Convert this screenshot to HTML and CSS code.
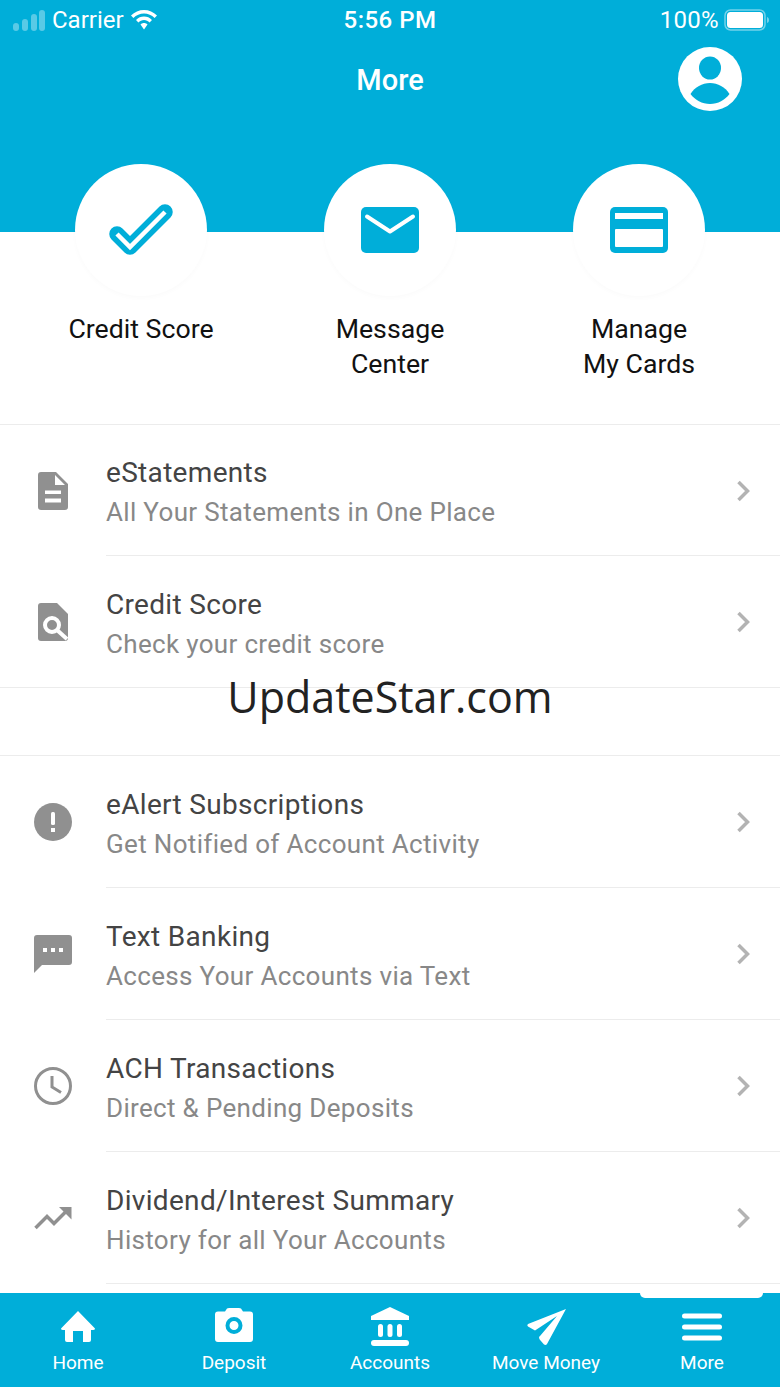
FILE: index.html
```html
<!DOCTYPE html>
<html lang="en">
<head>
<meta charset="utf-8">
<title>More</title>
<link rel="stylesheet" href="styles.css">
</head>
<body>
<div class="phone">
  <header class="hero">
    <div class="status">
      <div class="status-left">
        <svg class="signal" width="34" height="22" viewBox="0 0 34 22"><rect x="0" y="14" width="6" height="8" rx="3"/><rect x="9" y="10" width="6" height="12" rx="3"/><rect x="18" y="5" width="6" height="17" rx="3"/><rect x="26" y="1" width="6" height="21" rx="3"/></svg>
        <span>Carrier</span>
        <svg class="wifi" width="30" height="22" viewBox="0 0 28 22"><path d="M14 1C9 1 4.500 3 1 6.500L3.400 9C6.300 6.100 10 4.500 14 4.500S21.700 6.100 24.600 9L27 6.500C23.500 3 19 1 14 1Z"/><path d="M14 7.500C11 7.500 8.200 8.700 6 10.900L8.400 13.400C9.900 11.900 11.900 11 14 11S18.100 11.900 19.600 13.400L22 10.900C19.800 8.700 17 7.500 14 7.500Z"/><path d="M14 14C12.700 14 11.500 14.500 10.500 15.500L14 20.500L17.500 15.500C16.500 14.500 15.300 14 14 14Z"/></svg>
      </div>
      <div class="status-time">5:56 PM</div>
      <div class="status-right">
        <span class="battery-pct">100%</span>
        <svg width="46" height="22" viewBox="0 0 46 22"><rect class="batt-edge" x="1" y="1" width="40" height="20" rx="5.500"/><rect class="batt-fill" x="3" y="3" width="36" height="16" rx="3.500"/><path class="batt-tip" d="M43 8C44.500 8.500 45 9.500 45 11S44.500 13.500 43 14Z"/></svg>
      </div>
    </div>
    <div class="nav">
      <h1>More</h1>
      <svg class="avatar" width="64" height="64" viewBox="0 0 64 64"><circle cx="32" cy="32" r="32" fill="#fff"/><ellipse cx="32" cy="21" rx="11" ry="11.500" fill="#00aed9"/><path d="M32 36C24 36 17 40 12.500 47C17 53 24 57 32 57S47 53 51.500 47C47 40 40 36 32 36Z" fill="#00aed9"/></svg>
    </div>
  </header>

  <main class="content">
    <section class="quick">
      <div class="quick-item">
        <div class="quick-circle">
          <svg width="66" height="54" viewBox="0 0 66 54"><path d="M9 31L22 44L57 9" fill="none" stroke="#00aed9" stroke-width="15.500" stroke-linecap="round" stroke-linejoin="round"/><path d="M9 31L22 44L57 9" fill="none" stroke="#fff" stroke-width="4.500"/></svg>
        </div>
        <div class="quick-label">Credit Score</div>
      </div>
      <div class="quick-item">
        <div class="quick-circle">
          <svg width="58" height="46" viewBox="0 0 58 46"><rect x="0" y="0" width="58" height="46" rx="5" fill="#00aed9"/><path d="M6 9.500L29 24.500L52 9.500" fill="none" stroke="#fff" stroke-width="4" stroke-linecap="round" stroke-linejoin="round"/></svg>
        </div>
        <div class="quick-label">Message<br>Center</div>
      </div>
      <div class="quick-item">
        <div class="quick-circle">
          <svg width="58" height="46" viewBox="0 0 58 46"><rect x="0" y="0" width="58" height="46" rx="5" fill="#00aed9"/><rect x="5" y="6" width="48" height="6" fill="#fff"/><rect x="5" y="22" width="48" height="18" rx="1" fill="#fff"/></svg>
        </div>
        <div class="quick-label">Manage<br>My Cards</div>
      </div>
    </section>

    <section class="group group-first">
      <a class="row">
        <span class="row-icon">
          <svg width="30" height="38" viewBox="0 0 30 38"><path fill-rule="evenodd" d="M3 0H18L30 12V35A3 3 0 0 1 27 38H3A3 3 0 0 1 0 35V3A3 3 0 0 1 3 0ZM17 3V13H27ZM7 18.500V22H23V18.500ZM7 26.500V30.500H23V26.500Z" fill="#909090"/></svg>
        </span>
        <span class="row-body">
          <span class="row-title">eStatements</span>
          <span class="row-sub">All Your Statements in One Place</span>
        </span>
        <svg class="chev" width="14" height="22" viewBox="0 0 14 22"><path d="M2.500 2L11.500 11L2.500 20"/></svg>
      </a>
      <a class="row">
        <span class="row-icon">
          <svg width="30" height="38" viewBox="0 0 30 38"><path d="M3 0H19L30 11V35A3 3 0 0 1 27 38H3A3 3 0 0 1 0 35V3A3 3 0 0 1 3 0Z" fill="#909090"/><circle cx="14" cy="22" r="7" fill="none" stroke="#fff" stroke-width="4"/><path d="M19 27L29 36" stroke="#fff" stroke-width="4"/></svg>
        </span>
        <span class="row-body">
          <span class="row-title">Credit Score</span>
          <span class="row-sub">Check your credit score</span>
        </span>
        <svg class="chev" width="14" height="22" viewBox="0 0 14 22"><path d="M2.500 2L11.500 11L2.500 20"/></svg>
      </a>
    </section>

    <div class="spacer"><span class="watermark">UpdateStar.com</span></div>

    <section class="group">
      <a class="row">
        <span class="row-icon">
          <svg width="38" height="38" viewBox="0 0 38 38"><circle cx="19" cy="19" r="19" fill="#909090"/><rect x="17" y="9" width="4" height="13" rx="1.500" fill="#fff"/><rect x="17" y="25" width="4" height="4" fill="#fff"/></svg>
        </span>
        <span class="row-body">
          <span class="row-title">eAlert Subscriptions</span>
          <span class="row-sub">Get Notified of Account Activity</span>
        </span>
        <svg class="chev" width="14" height="22" viewBox="0 0 14 22"><path d="M2.500 2L11.500 11L2.500 20"/></svg>
      </a>
      <a class="row">
        <span class="row-icon">
          <svg width="38" height="38" viewBox="0 0 38 38"><path d="M3 0H35A3 3 0 0 1 38 3V27A3 3 0 0 1 35 30H8L0 38V3A3 3 0 0 1 3 0Z" fill="#909090"/><rect x="9" y="13" width="4" height="4" fill="#fff"/><rect x="17" y="13" width="4" height="4" fill="#fff"/><rect x="25" y="13" width="4" height="4" fill="#fff"/></svg>
        </span>
        <span class="row-body">
          <span class="row-title">Text Banking</span>
          <span class="row-sub">Access Your Accounts via Text</span>
        </span>
        <svg class="chev" width="14" height="22" viewBox="0 0 14 22"><path d="M2.500 2L11.500 11L2.500 20"/></svg>
      </a>
      <a class="row">
        <span class="row-icon">
          <svg width="38" height="38" viewBox="0 0 38 38"><circle cx="19" cy="19" r="17.500" fill="none" stroke="#909090" stroke-width="3"/><path d="M18 9V20L27 25.500" fill="none" stroke="#909090" stroke-width="3"/></svg>
        </span>
        <span class="row-body">
          <span class="row-title">ACH Transactions</span>
          <span class="row-sub">Direct &amp; Pending Deposits</span>
        </span>
        <svg class="chev" width="14" height="22" viewBox="0 0 14 22"><path d="M2.500 2L11.500 11L2.500 20"/></svg>
      </a>
      <a class="row">
        <span class="row-icon">
          <svg width="38" height="24" viewBox="0 0 38 24"><path d="M1.500 22L13 10.500L20 17.500L33 4.500" fill="none" stroke="#909090" stroke-width="3.500"/><path d="M25 1H37.500V13.500Z" fill="#909090"/></svg>
        </span>
        <span class="row-body">
          <span class="row-title">Dividend/Interest Summary</span>
          <span class="row-sub">History for all Your Accounts</span>
        </span>
        <svg class="chev" width="14" height="22" viewBox="0 0 14 22"><path d="M2.500 2L11.500 11L2.500 20"/></svg>
      </a>
    </section>
  </main>

  <nav class="tabs">
    <span class="tab-notch"></span>
    <a class="tab">
      <svg width="40" height="42" viewBox="0 0 40 42"><path d="M20 4L37 21.500Q37 23 35 23H33V33A2 2 0 0 1 31 35H25V24H15V35H9A2 2 0 0 1 7 33V23H5Q3 23 3 21.500Z" fill="#fff"/></svg>
      <span>Home</span>
    </a>
    <a class="tab">
      <svg width="40" height="42" viewBox="0 0 40 42"><path fill-rule="evenodd" d="M12 3Q12.500 1 15 1H25Q27.500 1 28 3L29 4.500H36A3 3 0 0 1 39 7.500V32A3 3 0 0 1 36 35H4A3 3 0 0 1 1 32V7.500A3 3 0 0 1 4 4.500H11ZM20 10A8.500 8.500 0 1 0 20 27A8.500 8.500 0 1 0 20 10ZM20 14A4.500 4.500 0 1 1 20 23A4.500 4.500 0 1 1 20 14Z" fill="#fff"/></svg>
      <span>Deposit</span>
    </a>
    <a class="tab">
      <svg width="40" height="42" viewBox="0 0 40 42"><path d="M20 0L39 9V13H1V9Z" fill="#fff"/><rect x="8" y="17" width="5" height="13" rx="2.500" fill="#fff"/><rect x="17.500" y="17" width="5" height="13" rx="2.500" fill="#fff"/><rect x="27" y="17" width="5" height="13" rx="2.500" fill="#fff"/><rect x="1" y="33" width="38" height="6" rx="3" fill="#fff"/></svg>
      <span>Accounts</span>
    </a>
    <a class="tab">
      <svg width="40" height="42" viewBox="0 0 40 42"><path d="M40 2L2 17Q0.500 18 2 19.500L9 23.500L31 9L14 29L13 30Q13 32 14.500 33.500L18 37.500Q20 38.500 21 37Z" fill="#fff"/></svg>
      <span>Move Money</span>
    </a>
    <a class="tab">
      <svg width="40" height="42" viewBox="0 0 40 42"><rect y="6.500" width="40" height="5" rx="2.500" fill="#fff"/><rect y="17.500" width="40" height="5" rx="2.500" fill="#fff"/><rect y="28.500" width="40" height="5" rx="2.500" fill="#fff"/></svg>
      <span>More</span>
    </a>
  </nav>
</div>
</body>
</html>
```
FILE: styles.css
```css
* { box-sizing: border-box; }
html, body { margin: 0; padding: 0; }
body { font-family: Roboto, "Liberation Sans", sans-serif; background: #fff; }

.phone {
  width: 780px;
  height: 1387px;
  display: flex;
  flex-direction: column;
  overflow: hidden;
}

.hero { height: 232px; background: #00aed9; color: #fff; flex: none; }

.status {
  height: 40px;
  display: grid;
  grid-template-columns: 1fr auto 1fr;
  align-items: center;
  padding: 0 10px;
  font-size: 24px;
}
.status-left, .status-right { display: flex; align-items: center; }
.status-left { gap: 5px; padding-left: 3px; }
.status-right { justify-content: flex-end; gap: 5px; }
.status-time { font-weight: 500; letter-spacing: 0.5px; }
.battery-pct { letter-spacing: 0.3px; }
.signal rect { fill: #fff; opacity: 0.35; }
.wifi path { fill: #fff; }
.batt-edge { fill: none; stroke: #fff; stroke-opacity: 0.45; stroke-width: 1.500; }
.batt-fill { fill: #fff; }
.batt-tip { fill: #fff; opacity: 0.45; }

.nav {
  display: flex;
  justify-content: center;
  align-items: center;
  position: relative;
  height: 72px;
  padding-top: 8px;
}
.nav h1 { margin: 0; font-size: 29px; font-weight: 500; line-height: 1; }
.avatar { position: absolute; right: 38px; top: 7px; }

.content { flex: 1; min-height: 0; position: relative; }

.quick {
  display: grid;
  grid-template-columns: repeat(3, 249px);
  justify-content: center;
  margin-top: -68px;
  height: 260px;
}
.quick-item { display: flex; flex-direction: column; align-items: center; }
.quick-circle {
  width: 132px;
  height: 132px;
  border-radius: 50%;
  background: #fff;
  box-shadow: 0 2px 5px rgba(0, 0, 0, 0.02);
  display: flex;
  align-items: center;
  justify-content: center;
}
.quick-label {
  margin-top: 16px;
  font-size: 26.700px;
  line-height: 35px;
  color: #111;
  text-align: center;
}

.group { border-top: 1px solid #ececec; }

.row {
  display: flex;
  align-items: center;
  height: 132px;
  position: relative;
}
.group-first .row:first-child { height: 131px; }
.row-icon { width: 106px; flex: none; display: flex; align-items: center; justify-content: center; }
.row-body {
  flex: 1;
  display: flex;
  flex-direction: column;
  gap: 5px;
  padding-top: 4px;
}
.row-title { font-size: 28px; line-height: 35px; color: #444; letter-spacing: 0.32px; }
.row-sub { font-size: 26px; line-height: 35px; color: #888; letter-spacing: 0.33px; }
.row::after { content: ""; position: absolute; left: 106px; right: 0; bottom: 0; height: 1px; background: #ececec; }
.chev { margin-right: 30px; flex: none; }
.chev path { fill: none; stroke: #b3b3b3; stroke-width: 3.500; }

.spacer {
  height: 68px;
  margin-top: -1px;
  border-top: 1px solid #ececec;
  position: relative;
  display: flex;
  justify-content: center;
}
.watermark {
  position: absolute;
  top: -21px;
  font-family: "Open Sans", sans-serif;
  font-size: 43px;
  line-height: 60px;
  color: #222;
}

.tabs {
  flex: none;
  height: 94px;
  background: #00aed9;
  display: grid;
  grid-template-columns: repeat(5, 156px);
  position: relative;
}
.tab-notch {
  position: absolute;
  left: 640px;
  top: 0;
  width: 123px;
  height: 5px;
  background: #fff;
  border-radius: 0 0 6px 6px;
}
.tab {
  display: flex;
  flex-direction: column;
  align-items: center;
  color: #fff;
  font-size: 19px;
  line-height: 24px;
  padding-top: 14px;
}
.tab span { margin-top: 2px; }
```
